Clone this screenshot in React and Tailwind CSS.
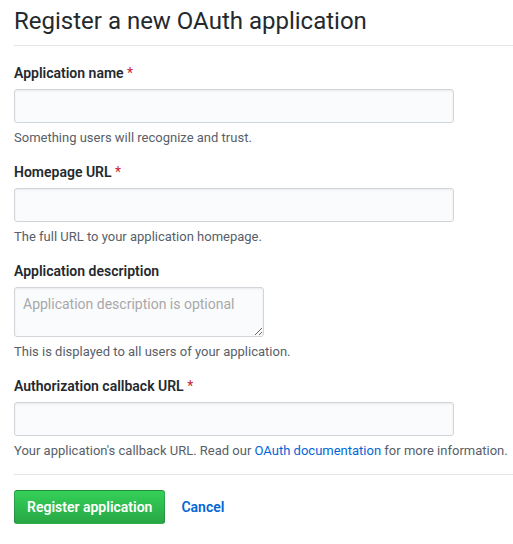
function Label({ children, required }) {
  return (
    <div className="text-[14px] leading-[20px] font-semibold text-[#24292e]">
      {children}
      {required && <span className="text-[#cb2431] font-normal"> *</span>}
    </div>
  );
}

function Note({ children }) {
  return <p className="mt-[6px] text-[13px] leading-[18px] text-[#586069]">{children}</p>;
}

function TextInput() {
  return (
    <input
      type="text"
      className="mt-[6px] block w-[440px] h-[34px] px-[8px] text-[14px] bg-[#fafbfc] border border-[#d1d5da] rounded-[3px] shadow-[inset_0_1px_2px_rgba(27,31,35,0.075)] outline-none"
    />
  );
}

export default function App() {
  return (
    <div className="pl-[14px] bg-white text-[#24292e]" style={{ fontFamily: 'Roboto, "Noto Sans", sans-serif' }}>
      <div className="pt-[6px] pb-[9px] border-b border-[#e1e4e8]">
        <h1 className="text-[24px] leading-[30px] font-normal text-[#24292e]">Register a new OAuth application</h1>
      </div>

      <form className="mt-[17px] flex flex-col gap-[15px]" onSubmit={(e) => e.preventDefault()}>
        <div>
          <Label required>Application name</Label>
          <TextInput />
          <Note>Something users will recognize and trust.</Note>
        </div>
        <div>
          <Label required>Homepage URL</Label>
          <TextInput />
          <Note>The full URL to your application homepage.</Note>
        </div>
        <div>
          <Label>Application description</Label>
          <textarea
            placeholder="Application description is optional"
            className="mt-[6px] block w-[250px] h-[50px] px-[8px] py-[6px] text-[14px] leading-[20px] bg-[#fafbfc] border border-[#d1d5da] rounded-[3px] shadow-[inset_0_1px_2px_rgba(27,31,35,0.075)] outline-none placeholder:text-[#a8a8a8]"
          />
          <Note>This is displayed to all users of your application.</Note>
        </div>
        <div>
          <Label required>Authorization callback URL</Label>
          <TextInput />
          <Note>
            Your application's callback URL. Read our{' '}
            <a href="#" className="text-[#0366d6]">OAuth documentation</a> for more information.
          </Note>
        </div>
      </form>

      <div className="mt-[14px] border-t border-[#e1e4e8]" />

      <div className="mt-[15px] flex items-center pb-[20px]">
        <button
          type="button"
          className="h-[34px] px-[12px] text-[14px] leading-[20px] font-semibold text-white rounded-[3px] border border-[rgba(27,31,35,0.2)] bg-gradient-to-b from-[#34d058] to-[#28a745]"
        >
          Register application
        </button>
        <a href="#" className="ml-[16px] text-[14px] font-semibold text-[#0366d6]">Cancel</a>
      </div>
    </div>
  );
}
